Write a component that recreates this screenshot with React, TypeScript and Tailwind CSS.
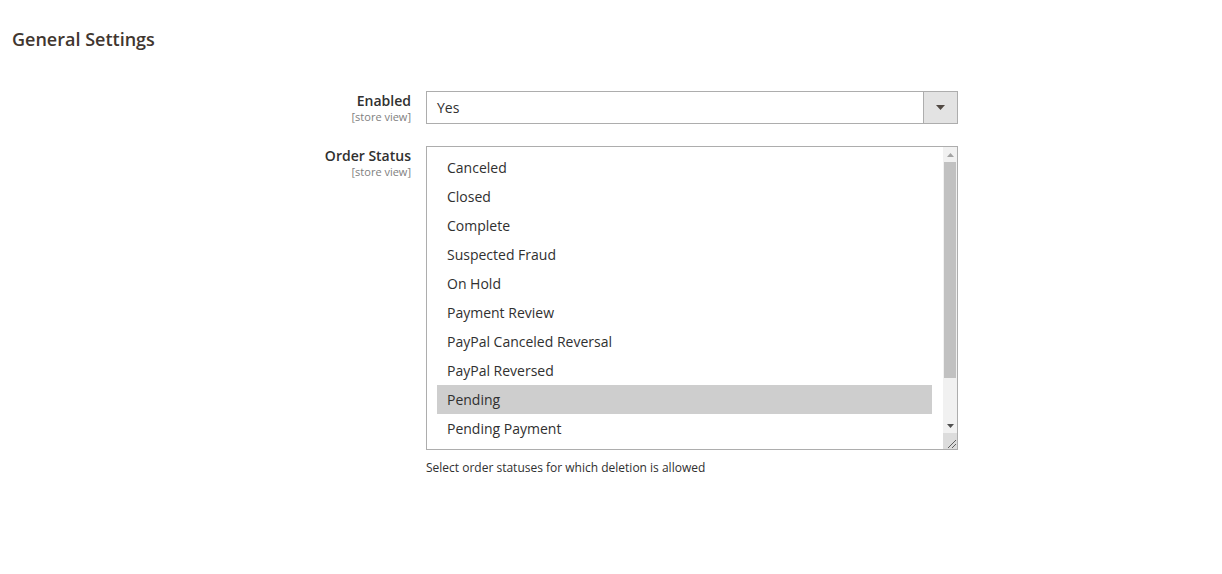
const statuses = [
  "Canceled",
  "Closed",
  "Complete",
  "Suspected Fraud",
  "On Hold",
  "Payment Review",
  "PayPal Canceled Reversal",
  "PayPal Reversed",
  "Pending",
  "Pending Payment",
];

function FieldLabel({ text }: { text: string }) {
  return (
    <div className="w-[411px] shrink-0 text-right">
      <div className="text-[14px] font-semibold leading-[18px] text-[#303030]">{text}</div>
      <div className="text-[11px] leading-[13px] text-[#808080]">[store view]</div>
    </div>
  );
}

export default function App() {
  return (
    <div className="min-h-[574px] bg-white text-[#303030]" style={{ fontFamily: '"Open Sans", sans-serif' }}>
      <h2 className="px-[12px] pt-[28px] text-[18px] font-semibold leading-[22px] text-[#41362f]">
        General Settings
      </h2>

      <div className="mt-[41px] flex">
        <div className="pt-[1px]">
          <FieldLabel text="Enabled" />
        </div>
        <div className="ml-[15px] flex h-[33px] w-[532px] border border-[#adadad] bg-white">
          <div className="flex flex-1 items-center pl-[10px] text-[14px] text-[#303030]">Yes</div>
          <div className="flex w-[34px] items-center justify-center border-l border-[#adadad] bg-[#e3e3e3]">
            <svg width="9" height="5" viewBox="0 0 9 5">
              <path d="M0 0h9L4.5 5z" fill="#514943" />
            </svg>
          </div>
        </div>
      </div>

      <div className="mt-[22px] flex">
        <div className="pt-[1px]">
          <FieldLabel text="Order Status" />
        </div>
        <div className="ml-[15px] w-[532px]">
          <div className="flex h-[304px] border border-[#adadad] bg-white">
            <div className="flex-1 pl-[10px] pr-[11px] pt-[6px]">
              {statuses.map((s) => (
                <div
                  key={s}
                  className={
                    "flex h-[29px] items-center pl-[10px] text-[14px] text-[#303030] " +
                    (s === "Pending" ? "bg-[#cecece]" : "")
                  }
                >
                  {s}
                </div>
              ))}
            </div>
            <div className="flex w-[14px] flex-col bg-[#f1f1f1]">
              <div className="flex h-[15px] items-center justify-center">
                <svg width="7" height="4" viewBox="0 0 7 4">
                  <path d="M3.5 0L7 4H0z" fill="#a3a3a3" />
                </svg>
              </div>
              <div className="mx-[1px] h-[216px] bg-[#c1c1c1]" />
              <div className="flex-1" />
              <div className="flex h-[15px] items-center justify-center">
                <svg width="7" height="4" viewBox="0 0 7 4">
                  <path d="M0 0h7L3.5 4z" fill="#505050" />
                </svg>
              </div>
              <div className="flex h-[16px] items-end justify-end bg-[#dcdcdc] pb-[1px] pr-[1px]">
                <svg width="9" height="9" viewBox="0 0 9 9">
                  <path d="M9 1L1 9M9 5L5 9" stroke="#606060" strokeWidth="1" />
                </svg>
              </div>
            </div>
          </div>
          <p className="mt-[10px] text-[12px] leading-[16px] text-[#303030]">
            Select order statuses for which deletion is allowed
          </p>
        </div>
      </div>
    </div>
  );
}
